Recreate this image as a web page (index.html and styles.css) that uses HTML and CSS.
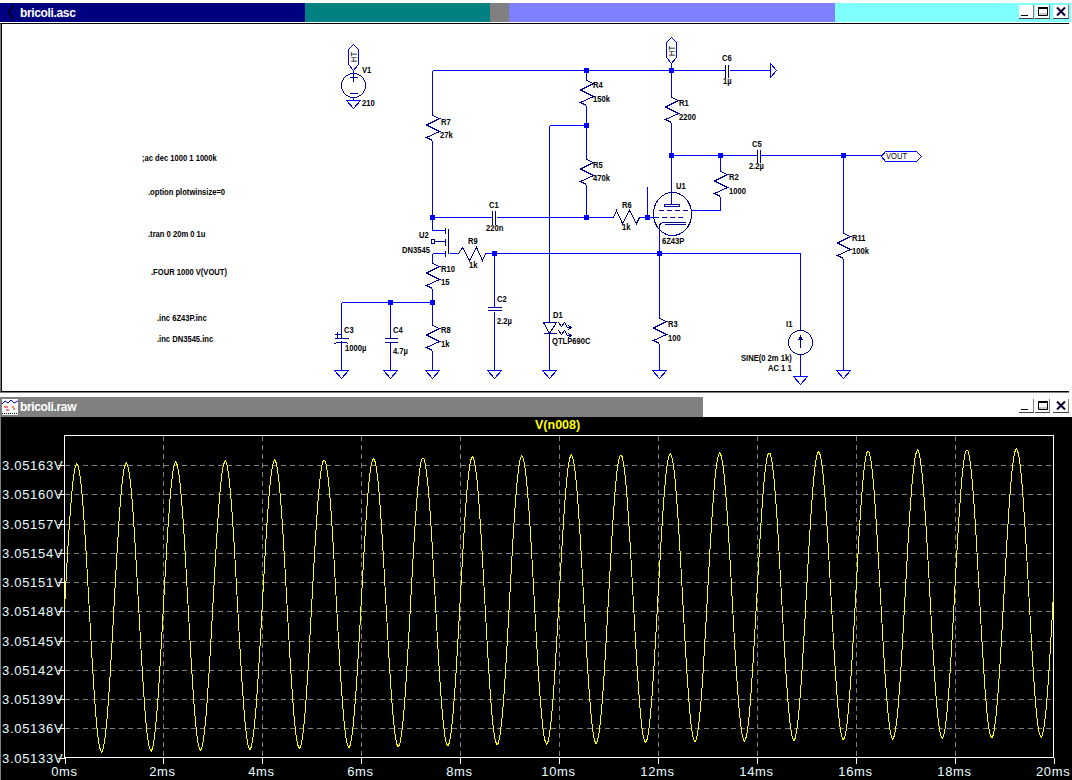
FILE: index.html
```html
<!DOCTYPE html>
<html lang="en">
<head>
<meta charset="utf-8">
<title>bricoli</title>
<link rel="stylesheet" href="styles.css">
</head>
<body>
<div class="desktop">
  <section class="window schematic-window">
    <header class="titlebar">
      <div class="title-fill">
        <svg class="app-icon" width="16" height="19" viewBox="0 0 16 19"><path d="M11 2 L7 7 L6 10 L7 12 L10 16" fill="none" stroke="#000" stroke-width="1.3"/></svg>
        <span class="title-text">bricoli.asc</span>
      </div>
      <div class="seg seg-teal"></div>
      <div class="seg seg-gray"></div>
      <div class="seg seg-peri"></div>
      <div class="seg seg-cyan">
        <div class="buttons">
          <button class="wbtn"><svg width="14" height="13" viewBox="0 0 14 13"><path d="M2 10.500H9" stroke="#000" stroke-width="1"/></svg></button>
          <button class="wbtn"><svg width="14" height="13" viewBox="0 0 14 13"><path d="M3.500 3.500H12.500V10.500H3.500Z" fill="#c8c8c8" stroke="#000" stroke-width="1"/><path d="M3 3H13" stroke="#000" stroke-width="2"/><path d="M4 4H12V8H4Z" fill="#fff"/></svg></button>
          <button class="wbtn wbtn-close"><svg width="14" height="13" viewBox="0 0 14 13"><path d="M3 2.500L11 10.500M11 2.500L3 10.500" stroke="#100030" stroke-width="2"/></svg></button>
        </div>
      </div>
    </header>
    <div class="canvas">
      <svg class="schem" width="1072" height="367" viewBox="0 24 1072 367">
        <defs>
          <path id="res" d="M0 0L7 3L-6 9.500L7 16L-6 22L0 25"/>
          <path id="gnd" d="M-7 0H7L0 8Z"/>
          <path id="ht" d="M0 0L5 5V20L0 26L-5 20V5Z"/>
        </defs>
        <g transform="translate(.5 .5)">
          <g class="wire">
            <path d="M432 70H725M729 70H770"/>
            <path d="M432 70V115M432 140V230H445"/>
            <path d="M432 217H492M496 217H613M639 217H653"/>
            <path d="M586 70V80M586 105V159M586 184V217"/>
            <path d="M549 125H586M549 125V322M549 333V370"/>
            <path d="M671 63V97M671 122V204"/>
            <path d="M671 155H757M760 155H881"/>
            <path d="M720 155V171M720 196V210H691"/>
            <path d="M843 155V233M843 258V370"/>
            <path d="M449 253H458M485 253H800V330M800 353V376"/>
            <path d="M494 253V307M494 311V370"/>
            <path d="M659 226V318M659 343V370"/>
            <path d="M432 253H445M432 253V263M432 288V325M432 350V370"/>
            <path d="M341 302H432M341 302V338M341 342V370M390 302V338M390 342V370"/>
            <path d="M647 186V217"/>
            <path d="M353 70V73M353 97V100"/>
            <path d="M770 63L776 70L770 77Z"/>
            <path d="M881 156L885 151H916L921 156L916 161H885Z"/>
            <use href="#ht" x="353" y="44"/>
            <use href="#ht" x="671" y="37"/>
            <use href="#gnd" x="341" y="370"/>
            <use href="#gnd" x="390" y="370"/>
            <use href="#gnd" x="432" y="370"/>
            <use href="#gnd" x="494" y="370"/>
            <use href="#gnd" x="549" y="370"/>
            <use href="#gnd" x="659" y="370"/>
            <use href="#gnd" x="843" y="370"/>
            <use href="#gnd" x="800" y="376"/>
            <use href="#gnd" x="353" y="100"/>
          </g>
          <g class="part">
            <use href="#res" x="432" y="115"/>
            <use href="#res" x="586" y="80"/>
            <use href="#res" x="586" y="159"/>
            <use href="#res" x="671" y="97"/>
            <use href="#res" x="720" y="171"/>
            <use href="#res" x="843" y="233"/>
            <use href="#res" x="659" y="318"/>
            <use href="#res" x="432" y="263"/>
            <use href="#res" x="432" y="325"/>
            <path d="M458 253L462 247L469 260L476 247L482 260L485 253"/>
            <path d="M613 217L616 210L622 223L629 210L636 223L639 217"/>
            <circle cx="353" cy="85" r="12"/>
            <path d="M353 73V81M349 77H357M349 93H357"/>
            <circle cx="800" cy="342" r="12"/>
            <path d="M800 337V347M798 340L800 336L802 340"/>
            <path d="M492 210V224M495 210V224"/>
            <path d="M725 64V77M728 64V77"/>
            <path d="M757 149V162M760 149V162"/>
            <path d="M487 307H501M487 310H501"/>
            <path d="M384 338H397M384 342H397"/>
            <path d="M334 338H348M334 343Q341 340 348 343M334 334H340M337 331V337"/>
            <path d="M445 227V233M445 238V245M445 250V256"/>
            <path d="M448 228V253"/>
            <path d="M434 241H445M431 239H434V243H431Z"/>
            <path d="M543 322H556L549 333ZM543 333H556"/>
            <path d="M558 322L561 326L564 322L567 327H570M568 325L571 327L568 329"/>
            <path d="M558 330L561 334L564 330L567 335H570M568 333L571 335L568 337"/>
            <ellipse cx="672" cy="213.500" rx="19" ry="21.500"/>
            <path d="M664 204H679V206H664Z"/>
            <path class="dash" d="M658 210H691"/>
            <path class="dash" d="M653 217H684"/>
            <path d="M659 226Q659 222 664 222H685M664 224H685"/>
          </g>
          <g class="junction" id="junctions"></g>
        </g>
        <g class="lbl">
          <text x="142" y="161">;ac dec 1000 1 1000k</text>
          <text x="148" y="195">.option plotwinsize=0</text>
          <text x="148" y="237">.tran 0 20m 0 1u</text>
          <text x="151" y="275">.FOUR 1000 V(VOUT)</text>
          <text x="157" y="321">.inc 6Z43P.inc</text>
          <text x="157" y="342">.inc DN3545.inc</text>
          <text x="362" y="73">V1</text>
          <text x="362" y="106">210</text>
          <text x="441" y="125">R7</text>
          <text x="440" y="138">27k</text>
          <text x="593" y="88">R4</text>
          <text x="593" y="102">150k</text>
          <text x="593" y="168">R5</text>
          <text x="593" y="181">470k</text>
          <text x="489" y="208">C1</text>
          <text x="486" y="231">220n</text>
          <text x="622" y="208">R6</text>
          <text x="622" y="230">1k</text>
          <text x="722" y="61">C6</text>
          <text x="723" y="84">1µ</text>
          <text x="679" y="106">R1</text>
          <text x="679" y="120">2200</text>
          <text x="752" y="147">C5</text>
          <text x="749" y="169">2.2µ</text>
          <text x="729" y="180">R2</text>
          <text x="729" y="194">1000</text>
          <text x="676" y="189">U1</text>
          <text x="662" y="244">6Z43P</text>
          <text x="419" y="238">U2</text>
          <text x="402" y="253">DN3545</text>
          <text x="468" y="244">R9</text>
          <text x="469" y="268">1k</text>
          <text x="441" y="272">R10</text>
          <text x="441" y="285">15</text>
          <text x="441" y="333">R8</text>
          <text x="441" y="347">1k</text>
          <text x="497" y="302">C2</text>
          <text x="497" y="324">2.2µ</text>
          <text x="344" y="333">C3</text>
          <text x="345" y="351">1000µ</text>
          <text x="393" y="333">C4</text>
          <text x="393" y="354">4.7µ</text>
          <text x="553" y="318">D1</text>
          <text x="552" y="344">QTLP690C</text>
          <text x="668" y="327">R3</text>
          <text x="668" y="341">100</text>
          <text x="786" y="327">I1</text>
          <text x="741" y="361">SINE(0 2m 1k)</text>
          <text x="768" y="371">AC 1 1</text>
          <text x="852" y="241">R11</text>
          <text x="852" y="254">100k</text>
          <text x="886" y="159" class="lbl-reg">VOUT</text>
          <text transform="translate(357,62) rotate(-90)" class="lbl-reg">HT</text>
          <text transform="translate(675,56) rotate(-90)" class="lbl-reg">HT</text>
        </g>
      </svg>
    </div>
  </section>
  <section class="window plot-window">
    <header class="titlebar plot-titlebar">
      <div class="plot-title-fill">
        <svg class="raw-icon" width="16" height="16" viewBox="0 0 16 16">
          <rect width="16" height="16" fill="#fff"/>
          <path d="M0 5L3 2L6 4L9 1L12 4L16 2" fill="none" stroke="#0000c0"/>
          <path d="M2 8H6M10 8H12M4 11H7M11 10H13" stroke="#e00000"/>
          <path d="M0 14.500H16" stroke="#000" stroke-dasharray="1 1"/>
        </svg>
        <span class="title-text">bricoli.raw</span>
      </div>
      <div class="plot-title-rest">
        <div class="buttons">
          <button class="wbtn"><svg width="14" height="13" viewBox="0 0 14 13"><path d="M2 10.500H9" stroke="#000" stroke-width="1"/></svg></button>
          <button class="wbtn"><svg width="14" height="13" viewBox="0 0 14 13"><path d="M3.500 3.500H12.500V10.500H3.500Z" fill="#c8c8c8" stroke="#000" stroke-width="1"/><path d="M3 3H13" stroke="#000" stroke-width="2"/><path d="M4 4H12V8H4Z" fill="#fff"/></svg></button>
          <button class="wbtn wbtn-close"><svg width="14" height="13" viewBox="0 0 14 13"><path d="M3 2.500L11 10.500M11 2.500L3 10.500" stroke="#100030" stroke-width="2"/></svg></button>
        </div>
      </div>
    </header>
    <div class="plot">
      <svg id="plot" width="1072" height="363" viewBox="0 417 1072 363"></svg>
    </div>
  </section>
</div>
<script src="plot.js"></script>
</body>
</html>
```
FILE: styles.css
```css
* { box-sizing: border-box; }
html, body { margin: 0; padding: 0; background: #fff; }
.desktop { width: 1072px; height: 780px; overflow: hidden; display: flex; flex-direction: column; background: #fff; padding-top: 3px; }
.window { display: flex; flex-direction: column; }
.schematic-window { height: 389px; flex: none; }
.plot-window { flex: 1; min-height: 0; padding-top: 5px; }
.titlebar { display: flex; height: 19px; flex: none; }
.title-fill { width: 305px; background: #000080; display: flex; align-items: center; padding-left: 3px; gap: 1px; }
.seg-teal { width: 185px; background: #008080; }
.seg-gray { width: 19px; background: #808080; }
.seg-peri { width: 326px; background: #8080ff; }
.seg-cyan { width: 236px; background: #80ffff; display: flex; justify-content: flex-end; }
.title-text { font: bold 12px "Liberation Sans", sans-serif; letter-spacing: -0.35px; color: #fff; }
.buttons { display: flex; gap: 1px; padding: 2px 2px 0 0; align-items: flex-start; }
.wbtn { width: 15px; height: 14px; padding: 0; border: 0; background: #fff; border-bottom: 1px solid #404040; border-right: 1px solid #808080; display: flex; align-items: center; justify-content: center; }
.wbtn-close { width: 16px; margin-left: 2px; }
.canvas { flex: 1; min-height: 0; margin-top: 1px; margin-right: 3px; border-top: 1px solid #000; border-left: 1px solid #808080; border-bottom: 1px solid #000; box-shadow: inset 1px 0 0 #000, 0 1px 0 #808080; background: #fff; }
.schem { display: block; margin-left: -1px; }
.schem path, .schem circle, .schem ellipse, .schem use { shape-rendering: crispEdges; }
.wire path, .wire use { fill: none; stroke: #0000ff; stroke-width: 1; }
.part path, .part circle, .part ellipse, .part use { fill: none; stroke: #000090; stroke-width: 1; }
.part .dash { stroke-dasharray: 5 3; }
.junction rect { fill: #0000ff; }
.lbl text { font: bold 9.5px "Liberation Sans", sans-serif; fill: #000; }
.lbl text.lbl-reg { font-weight: normal; }
.plot-titlebar { height: 20px; }
.plot-title-fill { width: 703px; background: #808080; display: flex; align-items: center; gap: 2px; padding-left: 2px; }
.plot-title-rest { flex: 1; background: #fff; display: flex; justify-content: flex-end; padding-right: 1px; }
.raw-icon { flex: none; }
.plot { flex: 1; background: #000; min-height: 0; border-left: 1px solid #808080; overflow: hidden; }
#plot { display: block; margin-left: -1px; }
.frame { fill: none; stroke: #fff; stroke-width: 1; shape-rendering: crispEdges; }
.grid { stroke: #808080; stroke-width: 1; stroke-dasharray: 5 4; shape-rendering: crispEdges; }
.tick { stroke: #fff; stroke-width: 1; shape-rendering: crispEdges; }
.trace { fill: none; stroke: #ffff00; stroke-width: 1; shape-rendering: crispEdges; }
.axis { font: 13px "Liberation Sans", sans-serif; letter-spacing: 0.7px; fill: #e8ffff; }
.trace-label { font: bold 12.500px "Liberation Sans", sans-serif; fill: #ffff00; }
```
FILE: plot.js
```js
(function () {
  var NS = 'http://www.w3.org/2000/svg';
  function el(parent, name, attrs, text) {
    var e = document.createElementNS(NS, name);
    for (var k in attrs) e.setAttribute(k, attrs[k]);
    if (text) e.textContent = text;
    parent.appendChild(e);
    return e;
  }
  var junctions = document.getElementById('junctions');
  [[586,70],[671,70],[586,125],[432,217],[586,217],[647,217],[671,155],[720,155],[843,155],[494,253],[659,253],[432,302],[390,302]].forEach(function (p) {
    el(junctions, 'rect', { x: p[0] - 2.5, y: p[1] - 2.5, width: 5, height: 5 });
  });
  // Schematic labels use a condensed face: squeeze each run to 80% of its natural width.
  document.querySelectorAll('.lbl text').forEach(function (t) {
    t.setAttribute('textLength', (t.getComputedTextLength() * 0.8).toFixed(1));
    t.setAttribute('lengthAdjust', 'spacingAndGlyphs');
  });
  var svg = document.getElementById('plot');
  var L = 64.5, R = 1053.5, T = 435.5, B = 757.5, pxMs = (R - L) / 20;
  for (var i = 1; i < 10; i++) {
    var x = Math.round(L + i * 2 * pxMs) + 0.5;
    el(svg, 'line', { class: 'grid', x1: x, x2: x, y1: T, y2: B });
  }
  for (var j = 0; j < 11; j++) {
    var y = Math.round(B - j * 29.25) + 0.5;
    if (j > 0) el(svg, 'line', { class: 'grid', x1: L, x2: R, y1: y, y2: y });
    el(svg, 'line', { class: 'tick', x1: L - 7, x2: L, y1: y, y2: y });
    var v = (3.05133 + j * 0.00003).toFixed(5) + 'V';
    el(svg, 'text', { class: 'axis', x: 2, y: y + 4.5 }, v);
  }
  for (var m = 0; m <= 10; m++) {
    var tx = Math.round(L + m * 2 * pxMs) + 0.5;
    el(svg, 'line', { class: 'tick', x1: tx, x2: tx, y1: B, y2: B + 6 });
    el(svg, 'text', { class: 'axis', x: tx - 1, y: 776, 'text-anchor': m === 10 ? 'end' : 'middle', dx: m === 10 ? 17 : 0 }, (m * 2) + 'ms');
  }
  el(svg, 'rect', { class: 'frame', x: L, y: T, width: R - L, height: B - T });
  el(svg, 'text', { class: 'trace-label', x: 535, y: 429 }, 'V(n008)');
  var pts = [];
  for (var px = 0; px <= R - L; px += 1) {
    var t = px / pxMs;
    var mid = 608.5 - t + 0.0105 * t * t;
    var yy = mid - 144 * Math.sin(2 * Math.PI * t);
    pts.push((L + px) + ',' + Math.round(yy));
  }
  el(svg, 'polyline', { class: 'trace', points: pts.join(' ') });
}());
```
